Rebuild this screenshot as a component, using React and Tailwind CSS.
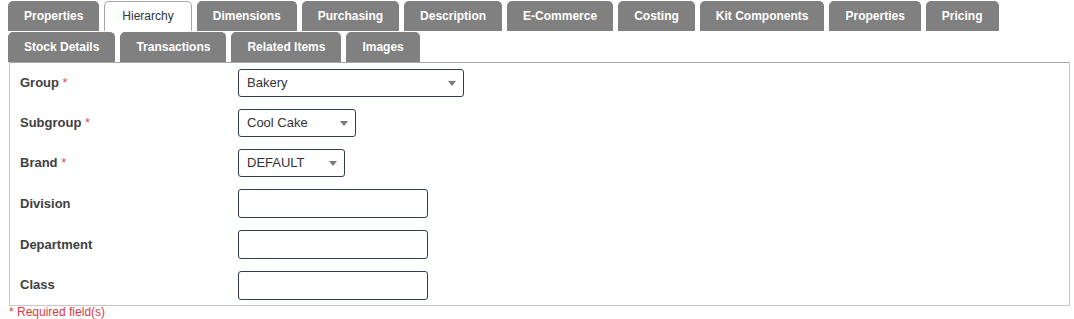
import React from 'react';

const TABS = [
  'Properties',
  'Hierarchy',
  'Dimensions',
  'Purchasing',
  'Description',
  'E-Commerce',
  'Costing',
  'Kit Components',
  'Properties',
  'Pricing',
  'Stock Details',
  'Transactions',
  'Related Items',
  'Images',
];

const FIELDS = [
  { label: 'Group', required: true, type: 'select', value: 'Bakery', width: 'w-[226px]', row: 'h-[40px]' },
  { label: 'Subgroup', required: true, type: 'select', value: 'Cool Cake', width: 'w-[118px]', row: 'h-[40px]' },
  { label: 'Brand', required: true, type: 'select', value: 'DEFAULT', width: 'w-[107px]', row: 'h-[40px]' },
  { label: 'Division', type: 'input', width: 'w-[190px]', row: 'h-[41px]' },
  { label: 'Department', type: 'input', width: 'w-[190px]', row: 'h-[41px]' },
  { label: 'Class', type: 'input', width: 'w-[190px]', row: 'h-[40px]' },
];

const Tab = ({ label, active }) => (
  <div
    className={
      active
        ? 'h-[30px] px-[17px] pb-[2px] flex items-center rounded-t-[5px] border border-b-0 border-[#a6a6a6] bg-white text-[#333] text-[12px]'
        : 'h-[30px] px-[15px] pb-[2px] flex items-center rounded-t-[5px] border border-b-0 border-[#808080] bg-[#808080] text-white text-[12px] font-bold'
    }
  >
    {label}
  </div>
);

const Field = ({ field }) => (
  <div className={`flex items-center ${field.row}`}>
    <div className="w-[218px] text-[13px] font-bold text-[#404040]">
      {field.label}
      {field.required && <span className="font-normal text-[#d9534f]"> *</span>}
    </div>
    {field.type === 'select' ? (
      <div
        className={`${field.width} h-[28px] flex items-center justify-between pl-[8px] pr-[7px] border border-[#2f3f50] rounded-[3px] bg-white text-[13px] text-[#333]`}
      >
        <span>{field.value}</span>
        <svg width="8" height="5" viewBox="0 0 8 5">
          <path d="M0 0 L8 0 L4 5 Z" fill="#7a7a7a" />
        </svg>
      </div>
    ) : (
      <div className={`${field.width} h-[29px] border border-[#2f3f50] rounded-[3px] bg-white`} />
    )}
  </div>
);

export default function App() {
  return (
    <div className="w-[1074px] h-[319px] bg-white font-['Liberation_Sans',Arial,sans-serif] overflow-hidden">
      <div className="flex flex-wrap gap-x-[5px] gap-y-[1px] pl-[8px] pt-[1px] pr-[4px]">
        {TABS.map((t, i) => (
          <Tab key={i} label={t} active={i === 1} />
        ))}
      </div>
      <div className="ml-[9px] w-[1061px] border border-[#c8c8c8] border-t-[#a8a8a8] px-[10px]">
        {FIELDS.map((f) => (
          <Field key={f.label} field={f} />
        ))}
      </div>
      <div className="pl-[9px] text-[12px] leading-[13px] text-[#e0393e]">* Required field(s)</div>
    </div>
  );
}
